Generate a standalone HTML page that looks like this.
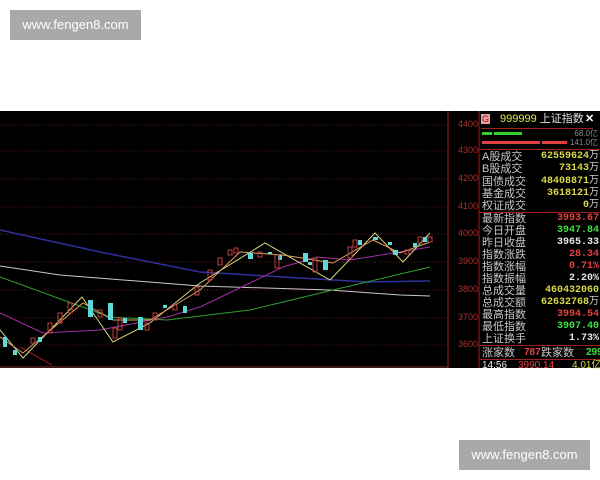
<!DOCTYPE html><html><head><meta charset="utf-8"><style>
body{margin:0;width:600px;height:480px;background:#fff;position:relative;overflow:hidden;font-family:"Liberation Sans","Noto Sans CJK SC",sans-serif}
.wm{position:absolute;background:#a9a9a9;color:#fff;font-size:13px;text-align:center;line-height:30px;width:131px;height:30px}
#chart{position:absolute;left:0;top:111px;width:600px;height:257px;background:#000}
.p{position:absolute;font-size:11px;white-space:nowrap;line-height:12px}
.l{left:482px;color:#c8c8c8}
.r{right:1px;text-align:right;font-family:"Liberation Mono",monospace;font-size:10px;font-weight:bold}
.y{color:#d8d84a}.w{color:#e8e8e8}.rd{color:#e84040}.g{color:#40e040}
.ax{position:absolute;left:456px;font-size:9px;color:#b03030;width:22px;text-align:right}
</style></head><body>
<div class="wm" style="left:10px;top:10px">www.fengen8.com</div>
<div class="wm" style="left:459px;top:440px">www.fengen8.com</div>
<div id="chart">
<svg width="600" height="257" style="position:absolute;left:0;top:0">
<g stroke="#5a1a1a" stroke-dasharray="1,2">
<line x1="0" y1="14" x2="448" y2="14"/><line x1="0" y1="40" x2="448" y2="40"/><line x1="0" y1="68" x2="448" y2="68"/><line x1="0" y1="96" x2="448" y2="96"/><line x1="0" y1="123" x2="448" y2="123"/><line x1="0" y1="151" x2="448" y2="151"/><line x1="0" y1="179" x2="448" y2="179"/><line x1="0" y1="207" x2="448" y2="207"/><line x1="0" y1="234" x2="448" y2="234"/></g>
<line x1="448" y1="0" x2="448" y2="257" stroke="#a02020"/>
<line x1="479" y1="0" x2="479" y2="257" stroke="#a02020"/>
<line x1="0" y1="256" x2="448" y2="256" stroke="#803030"/>
<polyline fill="none" stroke="#3030a0" stroke-width="1.5" points="0,119 100,141 200,161 300,167 367,171 430,170"/>
<polyline fill="none" stroke="#c8c8c8" points="0,155 60,164 200,175 330,179 400,184 430,185"/>
<polyline fill="none" stroke="#30a030" points="0,166 110,206 167,209 250,199 333,179 430,156"/>
<polyline fill="none" stroke="#a030a0" points="0,202 43,222 100,219 167,206 200,196 250,172 283,156 317,146 350,149 400,141 430,136"/>
<polyline fill="none" stroke="#b02020" points="20,236 52,254"/>
<polyline fill="none" stroke="#d8d880" points="0,219 23,247 82,186 113,231 150,212 200,172 265,132 330,169 375,122 403,151 430,122"/>
<polyline fill="none" stroke="#e0a060" points="0,226 23,242 83,192 113,209 150,209 200,179 240,141 283,144 333,152 373,129 400,142 430,131"/>
<g fill="#60d8d8"><rect x="3" y="226" width="4" height="10"/><rect x="13" y="239" width="4" height="5"/><rect x="38" y="226" width="4" height="5"/><rect x="88" y="189" width="5" height="17"/><rect x="108" y="192" width="5" height="17"/><rect x="123" y="207" width="4" height="5"/><rect x="138" y="206" width="5" height="13"/><rect x="163" y="194" width="4" height="3"/><rect x="183" y="195" width="4" height="7"/><rect x="248" y="142" width="5" height="6"/><rect x="268" y="141" width="4" height="2"/><rect x="278" y="144" width="4" height="5"/><rect x="303" y="142" width="5" height="9"/><rect x="308" y="151" width="4" height="3"/><rect x="323" y="149" width="5" height="10"/><rect x="358" y="129" width="4" height="5"/><rect x="373" y="126" width="5" height="3"/><rect x="388" y="131" width="4" height="3"/><rect x="393" y="139" width="5" height="5"/><rect x="413" y="132" width="4" height="4"/><rect x="423" y="126" width="4" height="5"/></g>
<g fill="none" stroke="#c04040"><rect x="31" y="227" width="4" height="5"/><rect x="48" y="212" width="4" height="10"/><rect x="58" y="202" width="4" height="10"/><rect x="68" y="192" width="4" height="10"/><rect x="98" y="199" width="4" height="7"/><rect x="113" y="217" width="4" height="10"/><rect x="118" y="207" width="4" height="12"/><rect x="145" y="212" width="4" height="7"/><rect x="153" y="202" width="4" height="7"/><rect x="173" y="194" width="4" height="5"/><rect x="195" y="176" width="4" height="8"/><rect x="208" y="159" width="4" height="10"/><rect x="218" y="147" width="4" height="7"/><rect x="228" y="139" width="4" height="5"/><rect x="234" y="137" width="4" height="5"/><rect x="258" y="141" width="4" height="5"/><rect x="275" y="144" width="4" height="13"/><rect x="313" y="147" width="4" height="14"/><rect x="348" y="136" width="4" height="11"/><rect x="353" y="129" width="4" height="7"/><rect x="405" y="139" width="4" height="4"/><rect x="418" y="126" width="4" height="6"/><rect x="428" y="126" width="4" height="5"/></g>
</svg>
<div class="ax" style="top:8px">4400</div><div class="ax" style="top:34px">4300</div><div class="ax" style="top:62px">4200</div><div class="ax" style="top:90px">4100</div><div class="ax" style="top:117px">4000</div><div class="ax" style="top:145px">3900</div><div class="ax" style="top:173px">3800</div><div class="ax" style="top:201px">3700</div><div class="ax" style="top:228px">3600</div>
<div style="position:absolute;left:481px;top:3px;width:9px;height:10px;background:#e0a0a0;color:#c00;font-size:9px;text-align:center;line-height:10px">G</div>
<div class="p" style="left:500px;top:2px;color:#e8e84a;font-size:11px">999999 <span style="color:#e0e0e0">上证指数</span></div>
<div class="p" style="left:585px;top:2px;color:#fff;font-weight:bold">✕</div>
<div style="position:absolute;left:481px;top:17px;width:112px;border-top:1px solid #a02020"></div>
<div style="position:absolute;left:482px;top:21px;width:10px;height:3px;background:#30d030"></div>
<div style="position:absolute;left:494px;top:21px;width:28px;height:3px;background:#30d030"></div>
<div style="position:absolute;left:482px;top:30px;width:58px;height:3px;background:#e04040"></div>
<div style="position:absolute;left:542px;top:30px;width:25px;height:3px;background:#e04040"></div>
<div class="p" style="right:2px;top:17px;font-size:8px;color:#888">68.0亿</div>
<div class="p" style="right:2px;top:26px;font-size:8px;color:#888">141.0亿</div>
<div style="position:absolute;left:479px;top:38px;width:121px;border-top:1px solid #a02020"></div>
<div class="p l" style="top:40px">A股成交</div><div class="p r y" style="top:40px">62559624<span style="font-weight:normal;color:#ccc">万</span></div>
<div class="p l" style="top:52px">B股成交</div><div class="p r y" style="top:52px">73143<span style="font-weight:normal;color:#ccc">万</span></div>
<div class="p l" style="top:65px">国债成交</div><div class="p r y" style="top:65px">48408871<span style="font-weight:normal;color:#ccc">万</span></div>
<div class="p l" style="top:77px">基金成交</div><div class="p r y" style="top:77px">3618121<span style="font-weight:normal;color:#ccc">万</span></div>
<div class="p l" style="top:89px">权证成交</div><div class="p r y" style="top:89px">0<span style="font-weight:normal;color:#ccc">万</span></div>
<div style="position:absolute;left:479px;top:101px;width:121px;border-top:1px solid #a02020"></div>
<div class="p l" style="top:102px">最新指数</div><div class="p r rd" style="top:102px">3993.67</div>
<div class="p l" style="top:114px">今日开盘</div><div class="p r g" style="top:114px">3947.84</div>
<div class="p l" style="top:126px">昨日收盘</div><div class="p r w" style="top:126px">3965.33</div>
<div class="p l" style="top:138px">指数涨跌</div><div class="p r rd" style="top:138px">28.34</div>
<div class="p l" style="top:150px">指数涨幅</div><div class="p r rd" style="top:150px">0.71%</div>
<div class="p l" style="top:162px">指数振幅</div><div class="p r w" style="top:162px">2.20%</div>
<div class="p l" style="top:174px">总成交量</div><div class="p r y" style="top:174px">460432060</div>
<div class="p l" style="top:186px">总成交额</div><div class="p r y" style="top:186px">62632768<span style="font-weight:normal;color:#ccc">万</span></div>
<div class="p l" style="top:198px">最高指数</div><div class="p r rd" style="top:198px">3994.54</div>
<div class="p l" style="top:210px">最低指数</div><div class="p r g" style="top:210px">3907.40</div>
<div class="p l" style="top:222px">上证换手</div><div class="p r w" style="top:222px">1.73%</div>
<div style="position:absolute;left:479px;top:234px;width:121px;border-top:1px solid #a02020"></div>
<div class="p l" style="top:236px">涨家数</div><div class="p rd" style="left:524px;top:236px;font-weight:bold;font-size:10px">787</div><div class="p l" style="left:541px;top:236px">跌家数</div><div class="p g" style="left:586px;top:236px;font-weight:bold;font-size:10px">299</div>
<div style="position:absolute;left:479px;top:248px;width:121px;border-top:1px solid #a02020"></div>
<div class="p w" style="left:482px;top:249px;font-size:10px">14:56</div><div class="p rd" style="left:518px;top:249px;font-size:10px">3990.14</div><div class="p y" style="left:572px;top:249px;font-size:10px">4.01亿</div>
</div>
</body></html>
